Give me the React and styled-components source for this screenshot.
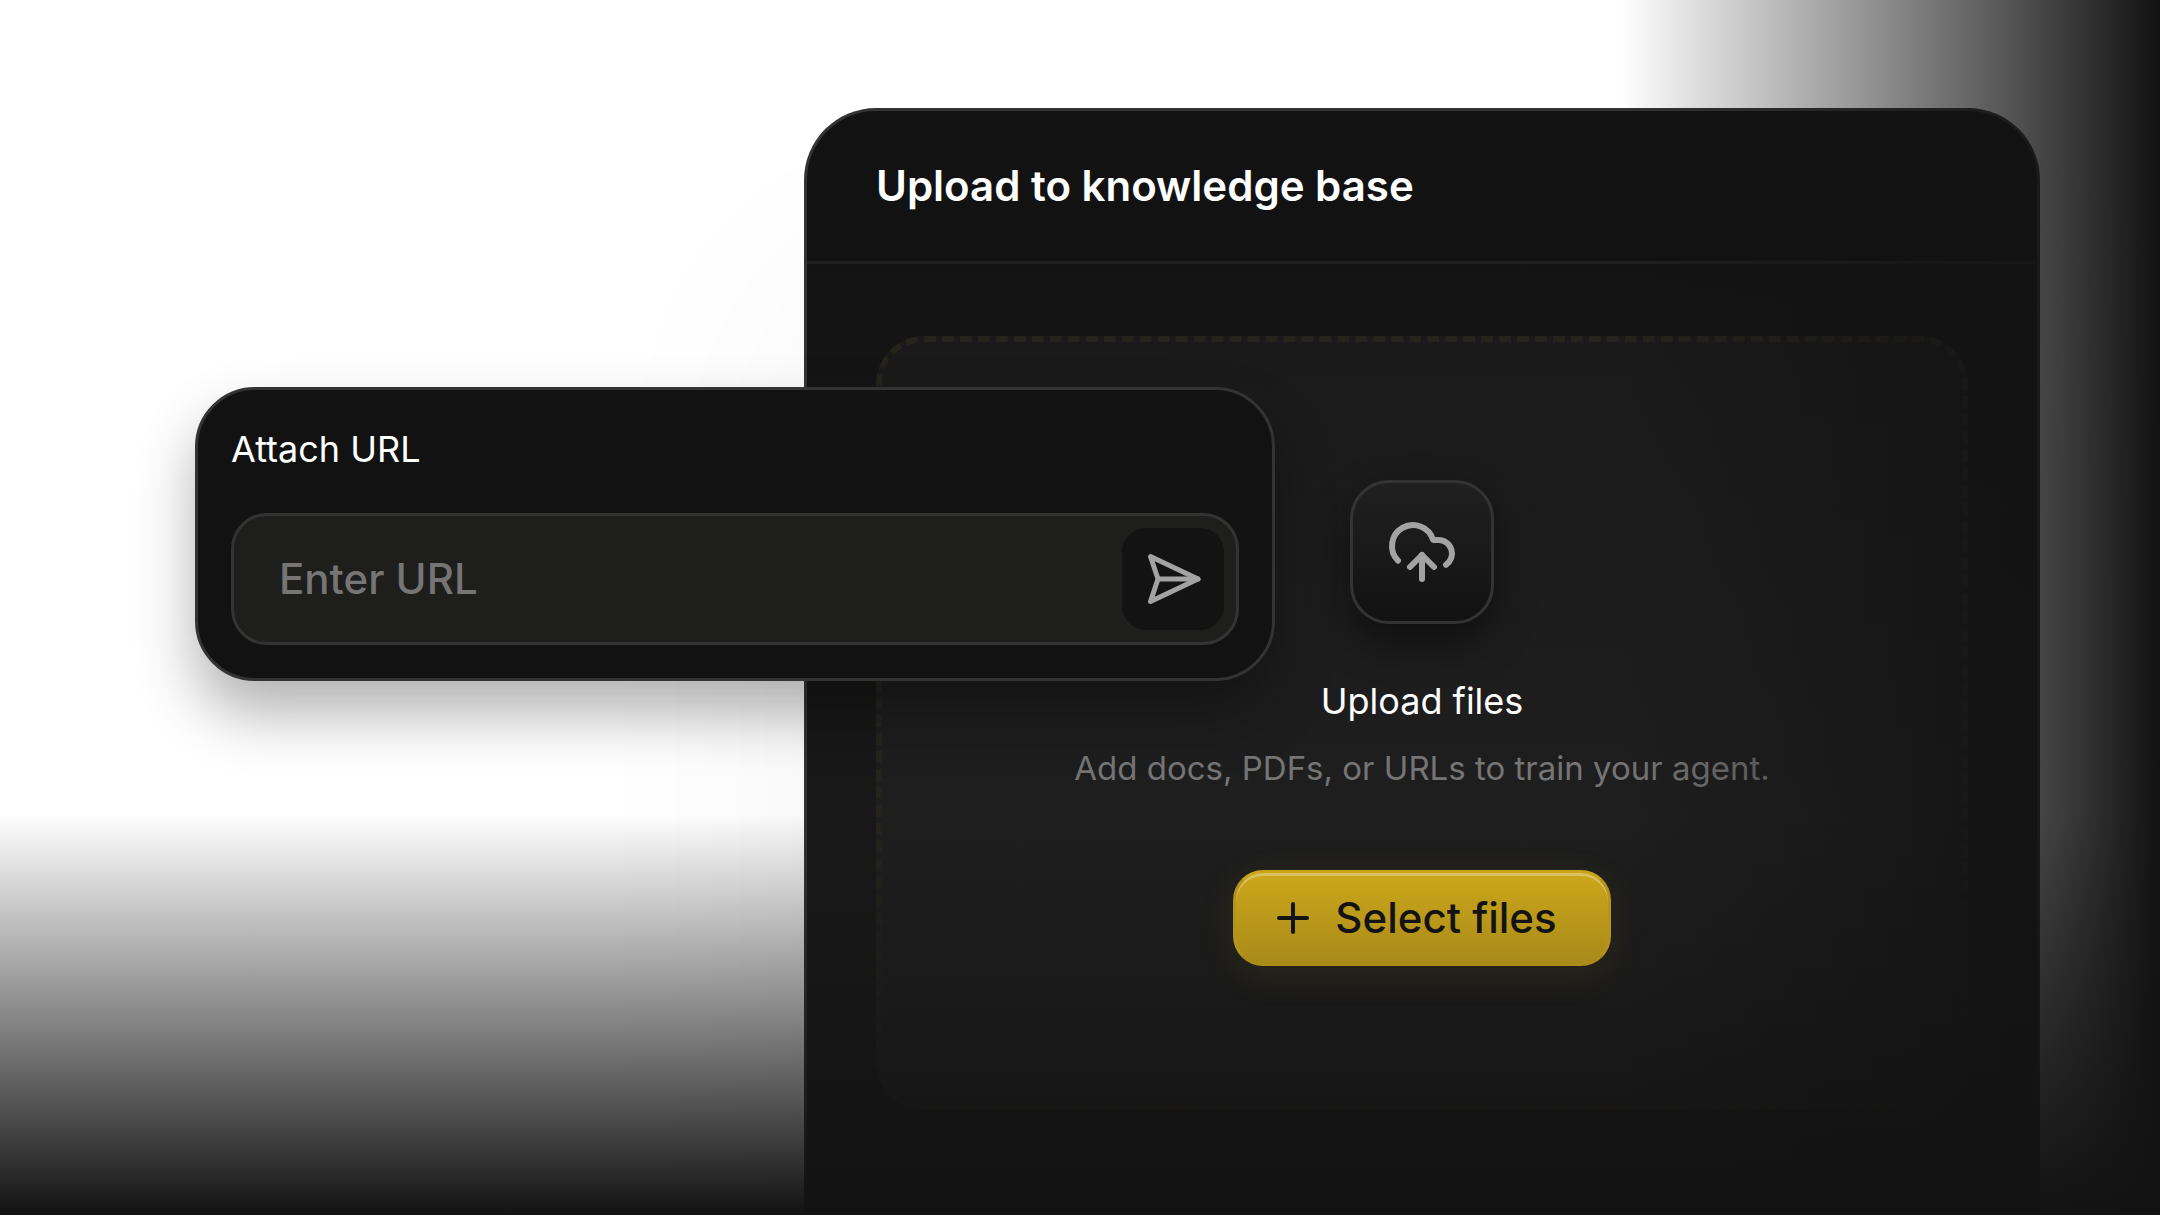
import React from "react";
import styled, { createGlobalStyle } from "styled-components";

const GlobalStyle = createGlobalStyle`
  *, *::before, *::after { box-sizing: border-box; }
  body {
    margin: 0;
    background: #fff;
    font-family: Inter, "Liberation Sans", sans-serif;
  }
  button, input { font: inherit; }
`;

const Page = styled.main`
  position: relative;
  display: grid;
  grid-template-columns: 57fr 103fr;
  height: 100vh;
  padding: 108px 120px 0;
  overflow: hidden;
  color: #fff;

  &::after {
    content: "";
    position: absolute;
    inset: 0;
    pointer-events: none;
    background:
      linear-gradient(to right, rgba(18, 18, 18, 0) 75%, #121212 100%),
      linear-gradient(to bottom, rgba(18, 18, 18, 0) 67%, #121212 100%);
  }
`;

const Panel = styled.section`
  grid-column: 2;
  display: flex;
  flex-direction: column;
  border: 3px solid #333;
  border-bottom: 0;
  border-radius: 72px 72px 0 0;
  background: #121212;
  box-shadow: 0 180px 300px rgba(0, 0, 0, 0.05);
`;

const PanelHeader = styled.header`
  padding: 45px 69px;
  border-bottom: 3px solid #1f1f1e;
`;

const PanelTitle = styled.h1`
  margin: 0;
  font-size: 42px;
  font-weight: 600;
  line-height: 60px;
`;

const PanelBody = styled.div`
  flex: 1;
  padding: 72px 69px;
  background: linear-gradient(#131313, #1c1c1c);
`;

const DropZone = styled.div`
  display: flex;
  flex-direction: column;
  align-items: center;
  padding: 138px 36px;
  border: 6px dashed #26231d;
  border-radius: 48px;
  background: rgba(255, 255, 255, 0.028);
`;

const IconTile = styled.div`
  display: grid;
  place-items: center;
  width: 144px;
  height: 144px;
  margin-bottom: 50px;
  border: 3px solid #333;
  border-radius: 39px;
  color: #a3a3a3;
  background: linear-gradient(#202020, #121212);
  box-shadow: 0 18px 42px rgba(0, 0, 0, 0.45);
`;

const DropTitle = styled.h2`
  margin: 0 0 15px;
  font-size: 36px;
  font-weight: 400;
  line-height: 54px;
`;

const DropHint = styled.p`
  margin: 0 0 77px;
  color: #757575;
  font-size: 33px;
  line-height: 50px;
  white-space: nowrap;
`;

const SelectButton = styled.button`
  position: relative;
  z-index: 1;
  display: flex;
  align-items: center;
  height: 96px;
  padding: 0 33px;
  border: 3px solid;
  border-color: #c9a51a #b5941c #ad8d1a;
  border-radius: 30px;
  color: #131313;
  background: linear-gradient(#cda81a, #a8891a) border-box;
  box-shadow:
    inset 0 3px 0 rgba(255, 255, 255, 0.3),
    0 9px 36px rgba(201, 165, 25, 0.1);
  font-size: 42px;
  font-weight: 500;
  cursor: pointer;
`;

const ButtonText = styled.span`
  padding: 0 18px 2px;
`;

const UrlCard = styled.form`
  position: absolute;
  top: 387px;
  left: 195px;
  width: 50%;
  padding: 33px;
  border: 3px solid #333;
  border-radius: 60px;
  background: #121212;
  box-shadow: 0 33px 60px rgba(0, 0, 0, 0.3);
`;

const UrlLabel = styled.label`
  display: block;
  margin-bottom: 38px;
  font-size: 36px;
  line-height: 52px;
`;

const UrlField = styled.div`
  display: flex;
  align-items: center;
  height: 132px;
  padding: 12px;
  border: 3px solid #333;
  border-radius: 36px;
  background: #1e1e1c;
`;

const UrlInput = styled.input`
  flex: 1;
  min-width: 0;
  height: 100%;
  padding: 0 33px 2px;
  border: 0;
  outline: 0;
  color: #fff;
  background: transparent;
  font-size: 42px;
  font-weight: 500;

  &::placeholder { color: #757575; opacity: 1; }
`;

const SendButton = styled.button`
  display: grid;
  place-items: center;
  width: 102px;
  height: 102px;
  padding: 0;
  border: 0;
  border-radius: 24px;
  color: #a3a3a3;
  background: #131313;
  cursor: pointer;
`;

function Icon({ size, children }) {
  return (
    <svg
      width={size}
      height={size}
      viewBox="0 0 24 24"
      fill="none"
      stroke="currentColor"
      strokeWidth="2"
      strokeLinecap="round"
      strokeLinejoin="round"
      aria-hidden="true"
    >
      {children}
    </svg>
  );
}

export default function App() {
  return (
    <>
      <GlobalStyle />
      <Page>
        <Panel>
          <PanelHeader>
            <PanelTitle>Upload to knowledge base</PanelTitle>
          </PanelHeader>
          <PanelBody>
            <DropZone>
              <IconTile>
                <Icon size={72}>
                  <path d="M12 13v8" />
                  <path d="M4 14.899A7 7 0 1 1 15.71 8h1.79a4.5 4.5 0 0 1 2.5 8.242" />
                  <path d="m8 17 4-4 4 4" />
                </Icon>
              </IconTile>
              <DropTitle>Upload files</DropTitle>
              <DropHint>Add docs, PDFs, or URLs to train your agent.</DropHint>
              <SelectButton type="button">
                <Icon size={48}>
                  <path d="M5 12h14" />
                  <path d="M12 5v14" />
                </Icon>
                <ButtonText>Select files</ButtonText>
              </SelectButton>
            </DropZone>
          </PanelBody>
        </Panel>
        <UrlCard onSubmit={(event) => event.preventDefault()}>
          <UrlLabel htmlFor="attach-url">Attach URL</UrlLabel>
          <UrlField>
            <UrlInput id="attach-url" type="url" placeholder="Enter URL" />
            <SendButton type="submit" aria-label="Send">
              <Icon size={60}>
                <path d="m3 3 3 9-3 9 19-9Z" />
                <path d="M6 12h16" />
              </Icon>
            </SendButton>
          </UrlField>
        </UrlCard>
      </Page>
    </>
  );
}
